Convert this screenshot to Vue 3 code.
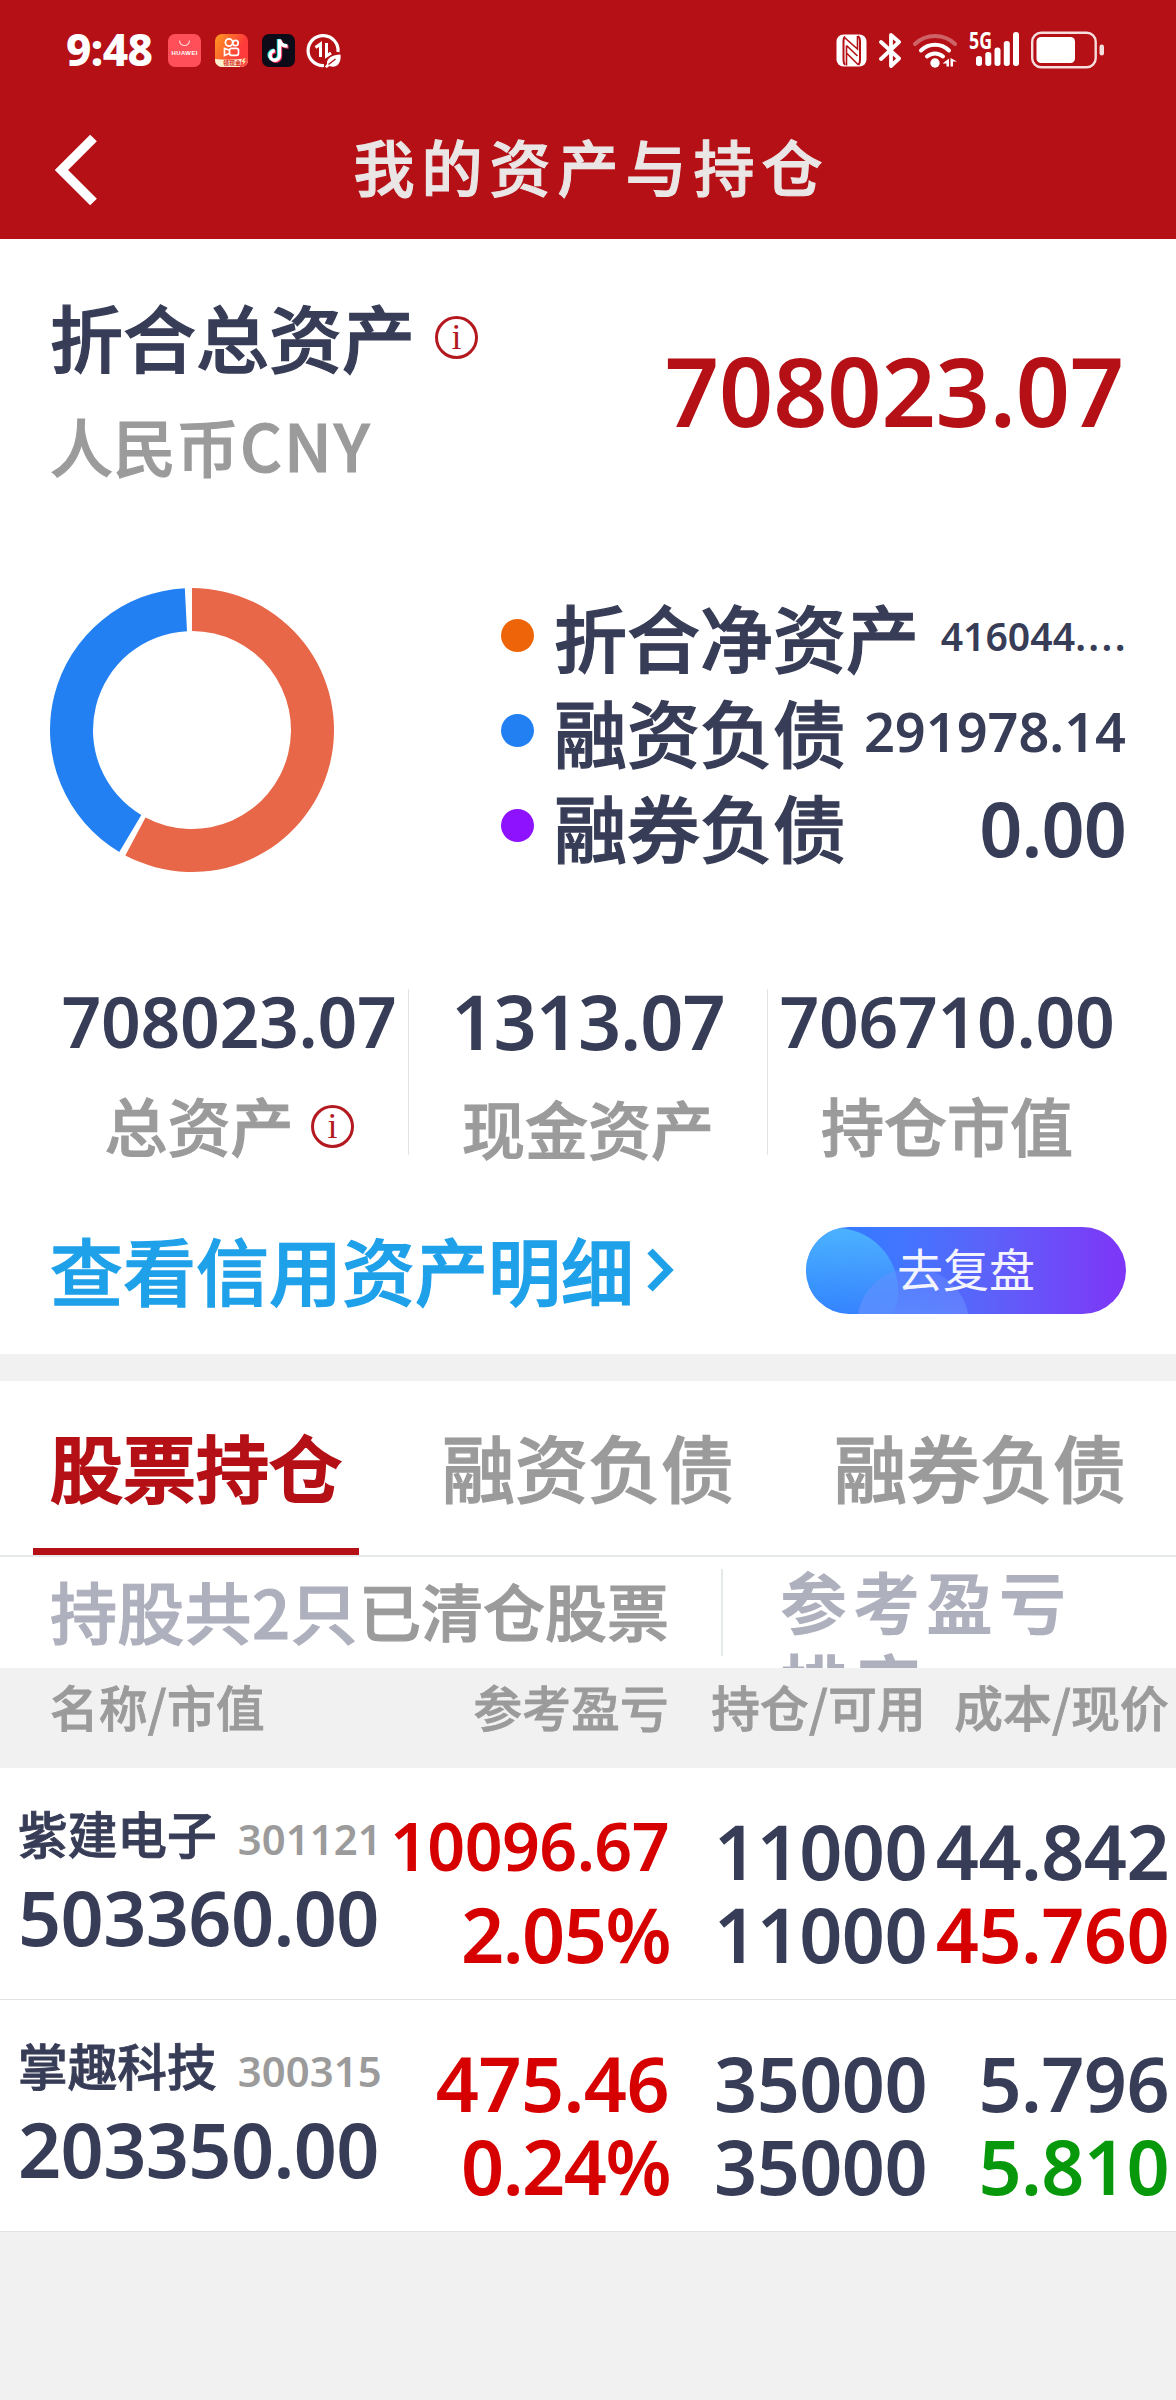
<script setup>
import { computed, ref } from 'vue'

const activeTab = ref('股票持仓')
const tabs = ['股票持仓', '融资负债', '融券负债']

const legends = [
  { label: '折合净资产', value: '416044', more: '....', color: 'orange', size: 'small' },
  { label: '融资负债', value: '291978.14', color: 'blue', size: 'middle' },
  { label: '融券负债', value: '0.00', color: 'purple', size: 'large' },
]

const stats = [
  { label: '总资产', value: '708023.07', info: true },
  { label: '现金资产', value: '1313.07', wide: true },
  { label: '持仓市值', value: '706710.00' },
]

const stocks = [
  {
    name: '紫建电子',
    code: '301121',
    marketValue: '503360.00',
    profit: '10096.67',
    rate: '2.05%',
    hold: '11000',
    usable: '11000',
    cost: '44.842',
    price: '45.760',
    trend: 'up',
  },
  {
    name: '掌趣科技',
    code: '300315',
    marketValue: '203350.00',
    profit: '475.46',
    rate: '0.24%',
    hold: '35000',
    usable: '35000',
    cost: '5.796',
    price: '5.810',
    trend: 'down',
  },
]

// 円グラフの扇形パスを作る（角度は12時から時計回り）
const arcPath = (from, to, outer = 142, inner = 99) => {
  const point = (deg, r) => {
    const rad = ((deg - 90) * Math.PI) / 180
    return `${(142 + r * Math.cos(rad)).toFixed(2)} ${(142 + r * Math.sin(rad)).toFixed(2)}`
  }
  const large = to - from > 180 ? 1 : 0
  return `M${point(from, outer)}A${outer} ${outer} 0 ${large} 1 ${point(to, outer)}L${point(to, inner)}A${inner} ${inner} 0 ${large} 0 ${point(from, inner)}Z`
}

const slices = computed(() => [
  { color: '#e86748', d: arcPath(0, 208) },
  { color: '#2280f2', d: arcPath(210.8, 357.1) },
])
</script>

<template>
  <div class="page">
    <header class="header">
      <div class="status">
        <span class="time">9:48</span>
        <svg class="app-icon" viewBox="0 0 33 33">
          <rect width="33" height="33" rx="7" fill="#ff4f58" />
          <path d="M11.5 6.5a5 5 0 0 0 10 0" fill="none" stroke="#ffd9d9" stroke-width="1.1" />
          <text x="16.5" y="21" class="huawei" text-anchor="middle" textLength="26">HUAWEI</text>
        </svg>
        <svg class="app-icon" viewBox="0 0 33 33">
          <defs>
            <linearGradient id="ks" x1="0" y1="0" x2="1" y2="0.5">
              <stop offset="0" stop-color="#ff9a1f" />
              <stop offset="0.8" stop-color="#ff3b3b" />
            </linearGradient>
            <clipPath id="ksClip"><rect width="33" height="33" rx="7" /></clipPath>
          </defs>
          <g clip-path="url(#ksClip)">
            <rect width="33" height="33" fill="url(#ks)" />
            <path d="M0 25q16 2 33-1v9H0z" fill="#fff0d2" />
            <path d="M27 24h6v9h-8z" fill="#ff4b42" />
            <path d="M28.5 24.5l-2 3.5h2l-1 3 3.5-4h-2l1.5-2.5z" fill="#ffe9a8" />
          </g>
          <g fill="none" stroke="#fff" stroke-width="1.7">
            <circle cx="14" cy="8.5" r="3.6" />
            <circle cx="20.5" cy="9" r="2.7" />
            <rect x="14.5" y="14.3" width="9" height="7" rx="2" />
            <path d="M14 16l-4.5-1.5v7L14 19.5" />
          </g>
          <text x="17" y="31" class="ks-text" text-anchor="middle">领现金</text>
        </svg>
        <svg class="app-icon" viewBox="0 0 33 33">
          <rect width="33" height="33" rx="7" fill="#0c0b17" />
          <g fill="none" stroke-width="3.4">
            <path d="M16.5 5v16a4.7 4.7 0 1 1-4.7-4.7M16.5 5c.5 4 3.5 6.5 8 6.5" stroke="#2ce0dc" />
            <path d="M18.5 6.5v16a4.7 4.7 0 1 1-4.7-4.7M18.5 6.5c.5 4 3.5 6.5 8 6.5" stroke="#f8305a" />
            <path d="M17.5 5.5v16a4.7 4.7 0 1 1-4.7-4.7M17.5 5.5c.5 4 3.5 6.5 8 6.5" stroke="#fff" />
          </g>
        </svg>
        <svg class="saver" viewBox="0 0 35 35">
          <path d="M18 32.5A15 15 0 1 1 32 19" fill="none" stroke="#fff" stroke-width="3.2" />
          <path d="M9.5 14.5l5-3.5v13M20.5 10v13l4.5-3" fill="none" stroke="#fff" stroke-width="3" />
          <path d="M34.5 21.5c1 9-4 14-11 11.5l-3 2-1.5-1.5 2-2.5c-.5-6 5-9 13.5-9.5z" fill="#fff" />
          <path d="M22.5 31.5l7-5.5" stroke="#b41016" stroke-width="1.3" />
        </svg>

        <div class="status-right">
          <svg class="nfc" viewBox="0 0 31 33">
            <rect x="0.5" y="0.5" width="30" height="32" rx="7" fill="#fff" />
            <path d="M9 2.500Q7.500 4 7.500 7v19q0 3 1.500 5M22 2q2 2 2 5v19q0 3-1.500 5" fill="none" stroke="#b41016" stroke-width="2" />
            <path d="M9 4l12.500 11V2M10.500 11.500L21.500 22M10.500 31.500v-20M11 19.500L22.500 31" fill="none" stroke="#b41016" stroke-width="1.6" />
          </svg>
          <svg class="bluetooth" viewBox="0 0 22 35">
            <path d="M2 9l18 16.5-8 7.5V2l8 7L2 26" fill="none" stroke="#fff" stroke-width="3.8" stroke-linecap="round" stroke-linejoin="round" />
          </svg>
          <svg class="wifi" viewBox="0 0 44 35">
            <g fill="none" stroke="#fff" stroke-width="4" stroke-linecap="round">
              <path d="M2 11a29 29 0 0 1 40 0" opacity=".35" />
              <path d="M8 17.5a20 20 0 0 1 28 0" />
              <path d="M14 23.5a12 12 0 0 1 16 0" />
            </g>
            <circle cx="22" cy="30" r="4.7" fill="#fff" />
            <path d="M29.5 30.5l6.5-5v8h-2.500v-3zM44 28.5l-6.5-3.5v8.500H40v-5z" fill="#fff" />
          </svg>
          <svg class="signal" viewBox="0 0 51 36">
            <text x="0" y="17" class="fiveg" textLength="23" lengthAdjust="spacingAndGlyphs">5G</text>
            <g fill="#fff">
              <rect x="7" y="24" width="6" height="10" rx="2.7" />
              <rect x="16.3" y="20" width="6" height="14" rx="2.7" />
              <rect x="25.5" y="15.5" width="6" height="18.5" rx="2.7" />
              <rect x="34.8" y="9" width="6" height="25" rx="2.7" />
              <rect x="44" y="0" width="6" height="34" rx="2.7" />
            </g>
          </svg>
          <svg class="battery" viewBox="0 0 74 38">
            <rect x="1.2" y="1.7" width="63.5" height="34.6" rx="9" fill="none" stroke="#f6dede" stroke-width="2.4" />
            <rect x="5.5" y="6" width="38.5" height="26" rx="4.5" fill="#fff" />
            <rect x="68.5" y="13.5" width="4.5" height="11" rx="2.2" fill="#f6dede" />
          </svg>
        </div>
      </div>
      <nav class="nav">
        <svg class="back" viewBox="0 0 42 72">
          <path d="M38.5 4L6.5 36l32 32" fill="none" stroke="#fff" stroke-width="9.5" />
        </svg>
        <h1 class="title">我的资产与持仓</h1>
      </nav>
    </header>

    <section class="assets">
      <div class="total">
        <div>
          <div class="total-label">
            折合总资产
            <svg class="info" viewBox="0 0 43 43">
              <circle cx="21.5" cy="21.5" r="20" />
              <text x="21.5" y="33" text-anchor="middle">i</text>
            </svg>
          </div>
          <div class="currency">人民币<span class="unit">CNY</span></div>
        </div>
        <div class="total-value">708023.07</div>
      </div>

      <div class="chart">
        <svg class="donut" viewBox="0 0 284 284">
          <path v-for="slice in slices" :key="slice.color" :d="slice.d" :fill="slice.color" />
        </svg>
        <ul class="legend">
          <li v-for="item in legends" :key="item.label">
            <i class="dot" :class="item.color"></i>
            <span class="legend-label">{{ item.label }}</span>
            <span class="legend-value" :class="item.size">{{ item.value }}<span v-if="item.more" class="more">{{ item.more }}</span></span>
          </li>
        </ul>
      </div>

      <div class="stats">
        <div v-for="stat in stats" :key="stat.label" class="stat" :class="{ wide: stat.wide }">
          <div class="stat-value">{{ stat.value }}</div>
          <div class="stat-label">
            {{ stat.label }}
            <svg v-if="stat.info" class="info" viewBox="0 0 43 43">
              <circle cx="21.5" cy="21.5" r="20" />
              <text x="21.5" y="33" text-anchor="middle">i</text>
            </svg>
          </div>
        </div>
      </div>

      <div class="actions">
        <a class="detail">
          查看信用资产明细
          <svg class="chevron" viewBox="0 0 28 46">
            <path d="M4 4l18.5 19L4 42" fill="none" stroke="#1fa1ea" stroke-width="7.5" />
          </svg>
        </a>
        <button class="review"><span>去复盘</span></button>
      </div>
    </section>

    <section class="holdings">
      <div class="tabs">
        <div
          v-for="tab in tabs"
          :key="tab"
          class="tab"
          :class="{ active: tab === activeTab }"
          @click="activeTab = tab"
        >
          {{ tab }}
        </div>
      </div>

      <div class="filter">
        <span class="count">持股共2只</span>
        <span class="cleared">已清仓股票</span>
        <div class="sort"><div class="sort-text">参考盈亏排序</div></div>
      </div>

      <div class="row thead">
        <span>名称/市值</span>
        <span>参考盈亏</span>
        <span>持仓/可用</span>
        <span>成本/现价</span>
      </div>

      <div v-for="stock in stocks" :key="stock.code" class="row stock">
        <div class="name-cell">
          <div class="name">
            <span class="name-text">{{ stock.name }}</span>
            <span class="code">{{ stock.code }}</span>
          </div>
          <div>{{ stock.marketValue }}</div>
        </div>
        <div class="up">
          <div :class="{ shrink: stock.profit.length > 7 }">{{ stock.profit }}</div>
          <div class="rate">{{ stock.rate }}</div>
        </div>
        <div class="amount">
          <div>{{ stock.hold }}</div>
          <div>{{ stock.usable }}</div>
        </div>
        <div>
          <div>{{ stock.cost }}</div>
          <div :class="stock.trend">{{ stock.price }}</div>
        </div>
      </div>
    </section>
  </div>
</template>

<style>
body {
  background: #f1f1f1;
}
</style>

<style scoped>
.page {
  width: 1176px;
  height: 2400px;
  overflow: hidden;
  background: #f1f1f1;
  color: #383d57;
  font-family: 'Noto Sans CJK SC', sans-serif;
  font-weight: 500;
  white-space: nowrap;
}

/* 中太の漢字 */
.title,
.total-label,
.currency,
.legend-label,
.stat-label,
.detail,
.tab,
.count,
.cleared,
.thead,
.name-text {
  -webkit-text-stroke: 0.018em currentColor;
}

.info text {
  -webkit-text-stroke: 0;
}

/* ヘッダー */
.header {
  height: 239px;
  background: #b41016;
}

.status {
  display: flex;
  align-items: center;
  height: 100px;
  padding: 0 71px 0 66px;
}

.time {
  width: 102px;
  margin-top: -2px;
  color: #fff;
  font-family: 'Noto Sans', sans-serif;
  font-weight: 800;
  font-size: 44px;
  letter-spacing: -0.6px;
}

.app-icon {
  width: 33px;
  height: 33px;
  margin-right: 14px;
}

.saver {
  width: 35px;
  height: 35px;
  margin-left: -3px;
}

.huawei {
  fill: #fff;
  font: 700 6px 'Liberation Sans', sans-serif;
}

.ks-text {
  fill: #d8321f;
  font: 700 6px 'Noto Sans CJK SC', sans-serif;
}

.fiveg {
  fill: #fff;
  font: 700 23px 'Noto Sans', sans-serif;
}

.status-right {
  display: flex;
  align-items: center;
  margin-left: auto;
}

.nfc {
  width: 31px;
  height: 33px;
}

.bluetooth {
  width: 22px;
  height: 35px;
  margin-left: 12px;
}

.wifi {
  width: 44px;
  height: 35px;
  margin-left: 12px;
}

.signal {
  width: 51px;
  height: 36px;
  margin-left: 12px;
  overflow: visible;
}

.battery {
  width: 74px;
  height: 38px;
  margin-left: 11px;
}

.nav {
  display: grid;
  grid-template-columns: 140px 1fr 140px;
  align-items: center;
  height: 139px;
}

.back {
  width: 42px;
  height: 72px;
  margin-left: 55px;
}

.title {
  margin: -8px 0 0;
  color: #eae6e6;
  font-size: 61px;
  font-weight: 500;
  line-height: 130px;
  letter-spacing: 7px;
  text-align: center;
  text-indent: 7px;
}

/* 資産 */
.assets {
  height: 1115px;
  background: #fff;
}

.total {
  display: flex;
  justify-content: space-between;
  align-items: center;
  padding: 46px 52px 0 50px;
}

.total-label {
  display: flex;
  align-items: center;
  gap: 20px;
  font-size: 73px;
  line-height: 100px;
}

.currency {
  margin-top: 10px;
  color: #9b9b9b;
  font-size: 63px;
  line-height: 98px;
}

.unit {
  margin-left: 1px;
  font-size: 65px;
  letter-spacing: 2px;
}

.total-value {
  color: #b41016;
  font-family: 'Noto Sans', sans-serif;
  font-weight: 600;
  font-size: 95px;
  letter-spacing: -0.2px;
}

.info {
  width: 43px;
  height: 43px;
  margin-top: 4px;
}

.info circle {
  fill: none;
  stroke: #b3191f;
  stroke-width: 3;
}

.info text {
  fill: #b3191f;
  font: 400 36px 'Liberation Serif', serif;
}

.chart {
  display: flex;
  justify-content: space-between;
  margin-top: 94px;
  padding: 0 50px;
}

.donut {
  width: 284px;
  height: 284px;
}

.legend {
  width: 625px;
  margin: 0;
  padding: 0;
  list-style: none;
}

.legend li {
  display: flex;
  align-items: center;
  height: 95px;
}

.dot {
  width: 33px;
  height: 33px;
  margin-right: 20px;
  border-radius: 50%;
}

.orange {
  background: #ee6509;
}

.blue {
  background: #2280f2;
}

.purple {
  background: #8e12fe;
}

.legend-label {
  margin-top: -1px;
  font-size: 73px;
  line-height: 93px;
}

.legend-value {
  margin-left: auto;
  font-family: 'Noto Sans', sans-serif;
  font-weight: 600;
}

.small {
  font-size: 39.2px;
}

.more {
  margin-right: -2px;
  letter-spacing: 2.4px;
}

.middle {
  font-size: 54px;
}

.large {
  margin-top: 4px;
  font-size: 75.5px;
  letter-spacing: -0.9px;
}

.stats {
  display: grid;
  grid-template-columns: 358px 359px 359px;
  grid-template-rows: 166px;
  margin: 116px 50px 0;
}

.stat {
  box-sizing: border-box;
  height: 166px;
}

.stat + .stat {
  border-left: 1px solid #e2e3e5;
}

.stat-value {
  font-family: 'Noto Sans', sans-serif;
  font-weight: 600;
  font-size: 69.6px;
  line-height: 64px;
  letter-spacing: -0.3px;
  text-align: center;
}

.stat-label {
  display: flex;
  align-items: center;
  justify-content: center;
  gap: 17px;
  margin-top: 35px;
  color: #9b9b9b;
  font-size: 63px;
  line-height: 72px;
}

.wide .stat-value {
  font-size: 75.5px;
  letter-spacing: -0.9px;
}

.wide .stat-label {
  margin-top: 38px;
}

.actions {
  display: flex;
  align-items: center;
  justify-content: space-between;
  height: 87px;
  margin: 72px 50px 0;
}

.detail {
  display: flex;
  align-items: center;
  gap: 12px;
  margin-top: -6px;
  color: #1fa1ea;
  font-size: 73px;
  line-height: 84px;
}

.chevron {
  width: 28px;
  height: 46px;
  margin-top: 4px;
}

.review {
  position: relative;
  width: 320px;
  height: 87px;
  padding: 0;
  border: 0;
  border-radius: 44px;
  overflow: hidden;
  background: linear-gradient(90deg, #2b7dff, #4275ff 30%, #5d61fa 58%, #7f35f7);
  color: #f4f4ff;
  font: 400 46px/75px 'Noto Sans CJK SC', sans-serif;
}

.review::before,
.review::after {
  content: '';
  position: absolute;
  border-radius: 50%;
}

.review::before {
  left: -32px;
  top: 1px;
  width: 124px;
  height: 124px;
  background: linear-gradient(#4bb2ff, rgba(50, 140, 255, 0.3) 75%);
}

.review::after {
  left: 51px;
  top: 41px;
  width: 112px;
  height: 112px;
  background: linear-gradient(rgba(110, 140, 255, 0.35), rgba(110, 150, 255, 0.6) 50%);
}

.review span {
  position: relative;
  z-index: 1;
  display: block;
  margin-top: -6px;
}

/* 保有一覧 */
.holdings {
  margin-top: 27px;
  background: #fff;
}

.tabs {
  display: flex;
  justify-content: space-between;
  height: 174px;
  padding: 0 50px;
  border-bottom: 2px solid #e5e9ea;
}

.tab {
  position: relative;
  color: #9b9b9b;
  font-size: 73px;
  line-height: 168px;
}

.tab.active {
  color: #b41016;
  -webkit-text-stroke-width: 0.03em;
}

.tab.active::after {
  content: '';
  position: absolute;
  left: -17px;
  right: -17px;
  bottom: 0;
  height: 7px;
  background: #b41016;
}

.filter {
  display: flex;
  align-items: flex-start;
  height: 111px;
  padding-left: 50px;
  overflow: hidden;
  line-height: 106px;
}

.count {
  width: 309px;
  color: #aeb0bd;
  font-size: 67px;
  letter-spacing: 0.3px;
}

.cleared {
  width: 362px;
  color: #9b9b9b;
  font-size: 62px;
}

.sort {
  width: 330px;
  height: 87px;
  margin-top: 12px;
  padding-left: 57px;
  border-left: 2px solid #e5e9ea;
  color: #aeb0bd;
  font-size: 67px;
  font-weight: 700;
  line-height: 82px;
  letter-spacing: 6px;
  white-space: normal;
}

.sort-text {
  margin-top: -10px;
}

.row {
  display: grid;
  grid-template-columns: 380px 289px 257px 243px;
  text-align: right;
}

.thead {
  height: 100px;
  background: #f1f1f1;
  color: #9b9b9b;
  font-size: 48.6px;
  line-height: 76px;
  letter-spacing: 0.3px;
}

.thead span:first-child {
  padding-left: 50px;
  text-align: left;
}

.stock {
  height: 189px;
  padding-top: 42px;
  border-bottom: 1px solid #e2e2e2;
  font-family: 'Noto Sans', sans-serif;
  font-weight: 600;
  font-size: 75.5px;
  line-height: 82.5px;
  letter-spacing: -0.6px;
}

.name-cell {
  margin-top: -17px;
  padding-left: 18px;
  text-align: left;
}

.name {
  display: flex;
  height: 83px;
  line-height: 79px;
}

.name-text {
  width: 200px;
  font-family: 'Noto Sans CJK SC', sans-serif;
  font-size: 49.7px;
  font-weight: 500;
  letter-spacing: 0;
}

.code {
  padding: 6px 0 0 21px;
  color: #9b9b9b;
  font-size: 41.8px;
  letter-spacing: 0.1px;
}

.shrink {
  height: 83px;
  font-size: 66.3px;
  line-height: 71px;
  letter-spacing: -0.6px;
}

.rate {
  margin-right: -1px;
  letter-spacing: -1.5px;
}

.amount {
  margin-right: -1px;
}

.up {
  color: #d70000;
}

.down {
  color: #07990b;
}
</style>
